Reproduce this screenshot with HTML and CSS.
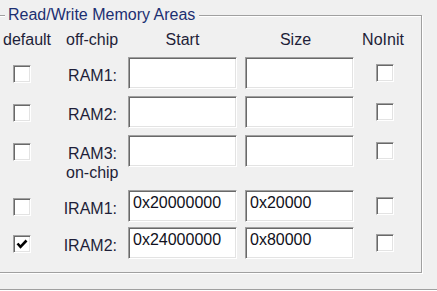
FILE: index.html
```html
<!DOCTYPE html>
<html lang="en">

<head>
    <meta charset="utf-8">
    <title>Read/Write Memory Areas</title>
    <link rel="stylesheet" href="styles.css">
</head>

<body>
    <fieldset class="group">
        <legend>Read/Write Memory Areas</legend>
        <div class="areas">
            <span class="head head-default">default</span>
            <span class="head head-chip">off-chip</span>
            <span class="head head-start">Start</span>
            <span class="head head-size">Size</span>
            <span class="head head-noinit">NoInit</span>

            <span class="check"></span>
            <label class="name">RAM1:</label>
            <input class="edit" type="text" value="">
            <input class="edit" type="text" value="">
            <span class="check check-noinit"></span>

            <span class="check"></span>
            <label class="name">RAM2:</label>
            <input class="edit" type="text" value="">
            <input class="edit" type="text" value="">
            <span class="check check-noinit"></span>

            <span class="check"></span>
            <label class="name">RAM3:</label>
            <input class="edit" type="text" value="">
            <input class="edit" type="text" value="">
            <span class="check check-noinit"></span>

            <span class="head head-chip head-onchip">on-chip</span>

            <span class="check"></span>
            <label class="name">IRAM1:</label>
            <input class="edit" type="text" value="0x20000000">
            <input class="edit" type="text" value="0x20000">
            <span class="check check-noinit"></span>

            <span class="check"><svg width="14" height="14" viewBox="0 0 14 14"><polyline points="2.5,6.5 5.5,9.8 11.5,3.5" fill="none" stroke="#000" stroke-width="2.6"/></svg></span>
            <label class="name">IRAM2:</label>
            <input class="edit" type="text" value="0x24000000">
            <input class="edit" type="text" value="0x80000">
            <span class="check check-noinit"></span>
        </div>
    </fieldset>
    <div class="separator"></div>
</body>

</html>
```

FILE: styles.css
```css
body {
    background: #f0f0f0;
    color: #1e1e38;
    font-family: "Liberation Sans", Arial, sans-serif;
    font-size: 16px;
    line-height: 18px;
    margin: 0;
    overflow: hidden;
}

.group {
    border: 1px solid #a0a0a0;
    box-shadow: 1px 1px 0 #fff, inset 1px 1px 0 #fff;
    margin: 6px 15px 0 -6px;
    min-width: 0;
    padding: 7px 5px 13px 5px;
}

.group legend {
    background: #f0f0f0;
    color: #1c2f72;
    margin-left: 5px;
    padding: 0 4px 0 3px;
}

.areas {
    display: grid;
    grid-template-columns: 60px 68px 117px 109px 1fr;
    grid-template-rows: 26px 39px 39px 32px 23px 37px 32px;
    align-items: start;
}

.head-default {
    padding-left: 3px;
}

.head-chip {
    grid-column: 2;
    margin-left: 6px;
}

.head-onchip {
    grid-column: 2 / -1;
    justify-self: start;
    margin-top: -3px;
}

.head-start,
.head-size {
    text-align: center;
    width: 109px;
}

.head-size {
    padding-right: 8px;
    box-sizing: border-box;
}

.head-noinit {
    justify-self: center;
    margin-right: 4px;
}

.name {
    justify-self: end;
    margin-right: 11px;
    margin-top: 10px;
}

.edit {
    background: #fff;
    border: 1px solid;
    border-color: #a0a0a0 #fff #fff #a0a0a0;
    box-shadow: inset 1px 1px 0 #696969, inset -1px -1px 0 #e3e3e3;
    box-sizing: border-box;
    color: #101020;
    font: inherit;
    height: 32px;
    margin: 0;
    outline: none;
    padding: 3px 0 9px 4px;
    width: 109px;
}

.check {
    align-items: center;
    background: #fff;
    border: 1px solid;
    border-color: #a0a0a0 #fff #fff #a0a0a0;
    box-shadow: inset 1px 1px 0 #696969, inset -1px -1px 0 #e3e3e3;
    box-sizing: border-box;
    display: flex;
    height: 18px;
    justify-content: center;
    margin: 8px 0 0 13px;
    width: 18px;
}

.check-noinit {
    justify-self: center;
    margin: 7px 0 0;
}

.separator {
    border-bottom: 1px solid #fff;
    border-top: 1px solid #a0a0a0;
    margin-top: 16px;
}
```
